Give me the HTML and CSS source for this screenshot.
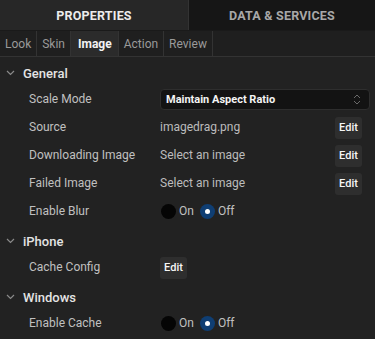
FILE: index.html
```html
<!DOCTYPE html>
<html>
<head>
<meta charset="utf-8">
<link rel="stylesheet" href="styles.css">
</head>
<body>
<div class="panel">
  <div class="tabs">
    <div class="tab active">PROPERTIES</div>
    <div class="tab">DATA &amp; SERVICES</div>
  </div>
  <div class="subtabs">
    <div class="subtab">Look</div>
    <div class="subtab">Skin</div>
    <div class="subtab active">Image</div>
    <div class="subtab">Action</div>
    <div class="subtab">Review</div>
  </div>
  <div class="content">
    <div class="section-head">
      <svg class="chev" width="9" height="6" viewBox="0 0 9 6"><path d="M1 1 L4.5 4.5 L8 1" fill="none" stroke="#8a8a8a" stroke-width="1.2"/></svg>
      <span>General</span>
    </div>
    <div class="row">
      <div class="label">Scale Mode</div>
      <div class="value">
        <div class="select">
          <span>Maintain Aspect Ratio</span>
          <svg width="8" height="11" viewBox="0 0 8 11"><path d="M1 4 L4 1 L7 4 M1 7 L4 10 L7 7" fill="none" stroke="#6a6a6a" stroke-width="1"/></svg>
        </div>
      </div>
    </div>
    <div class="row">
      <div class="label">Source</div>
      <div class="value spread"><span>imagedrag.png</span><button class="btn">Edit</button></div>
    </div>
    <div class="row">
      <div class="label">Downloading Image</div>
      <div class="value spread"><span>Select an image</span><button class="btn">Edit</button></div>
    </div>
    <div class="row">
      <div class="label">Failed Image</div>
      <div class="value spread"><span>Select an image</span><button class="btn">Edit</button></div>
    </div>
    <div class="row">
      <div class="label">Enable Blur</div>
      <div class="value radios">
        <span class="radio"></span><span class="rlabel">On</span>
        <span class="radio on"></span><span class="rlabel">Off</span>
      </div>
    </div>

    <div class="section-head later">
      <svg class="chev" width="9" height="6" viewBox="0 0 9 6"><path d="M1 1 L4.5 4.5 L8 1" fill="none" stroke="#8a8a8a" stroke-width="1.2"/></svg>
      <span>iPhone</span>
    </div>
    <div class="row">
      <div class="label">Cache Config</div>
      <div class="value"><button class="btn">Edit</button></div>
    </div>

    <div class="section-head later">
      <svg class="chev" width="9" height="6" viewBox="0 0 9 6"><path d="M1 1 L4.5 4.5 L8 1" fill="none" stroke="#8a8a8a" stroke-width="1.2"/></svg>
      <span>Windows</span>
    </div>
    <div class="row">
      <div class="label">Enable Cache</div>
      <div class="value radios">
        <span class="radio"></span><span class="rlabel">On</span>
        <span class="radio on"></span><span class="rlabel">Off</span>
      </div>
    </div>
  </div>
</div>
</body>
</html>
```

FILE: styles.css
```css
* { box-sizing: border-box; }
html, body {
  margin: 0;
  padding: 0;
  background: #222222;
  font-family: Roboto, "Liberation Sans", sans-serif;
  overflow: hidden;
}
.panel {
  width: 375px;
  height: 339px;
  background: #222222;
}
.tabs {
  display: flex;
  height: 31px;
  border-bottom: 1px solid #1a1a1a;
}
.tab {
  display: flex;
  align-items: center;
  justify-content: center;
  font-size: 12.5px;
  font-weight: 700;
  letter-spacing: 0.2px;
  color: #a8a8a8;
  background: #161616;
  flex: 1 1 0;
}
.tab.active {
  flex: 0 0 189px;
  background: #272727;
  color: #ececec;
  border-right: 1px solid #333;
}
.subtabs {
  display: flex;
  height: 26px;
  background: #1f1f1f;
  border-bottom: 1px solid #333;
}
.subtab {
  display: flex;
  align-items: center;
  padding: 0 5px;
  font-size: 12px;
  color: #9a9a9a;
  border-right: 1px solid #333;
  height: 100%;
}
.subtab.active {
  background: #2b2b2b;
  color: #f2f2f2;
  font-weight: 700;
  padding: 0 6px 0 7px;
}
.content {
  padding-top: 4px;
}
.section-head {
  display: flex;
  align-items: center;
  height: 24px;
  padding-left: 4px;
  font-size: 13px;
  font-weight: 500;
  color: #e4e4e4;
}
.section-head.later { margin-top: 4px; }
.chev { margin: 0 8px 0 2px; }
.row {
  display: flex;
  align-items: center;
  height: 28px;
}
.label {
  width: 160px;
  padding-left: 29px;
  font-size: 12px;
  color: #c0c0c0;
}
.value {
  flex: 1;
  display: flex;
  align-items: center;
  font-size: 12px;
  color: #bcbcbc;
  padding-right: 13px;
}
.spread { justify-content: space-between; }
.select {
  width: 210px;
  height: 21px;
  background: #131313;
  border: 1px solid #2e2e2e;
  border-radius: 4px;
  display: flex;
  align-items: center;
  justify-content: space-between;
  padding: 0 8px 0 5px;
  font-size: 11px;
  font-weight: 700;
  color: #f4f4f4;
  margin-right: -8px;
}
.btn {
  width: 27px;
  height: 22px;
  padding: 0;
  display: flex;
  align-items: center;
  justify-content: center;
  background: #2e2e2e;
  border: none;
  border-radius: 3px;
  font-family: Roboto, "Liberation Sans", sans-serif;
  font-size: 11px;
  font-weight: 500;
  color: #f6f6f6;
  margin-top: 1px;
}
.radio {
  width: 15px;
  height: 15px;
  border-radius: 50%;
  background: #050505;
  display: inline-block;
  position: relative;
  margin-left: 1px;
}
.radio.on {
  background: #0f3e73;
  margin-left: 6px;
}
.radio.on::after {
  content: "";
  position: absolute;
  left: 5px;
  top: 5px;
  width: 5px;
  height: 5px;
  border-radius: 50%;
  background: #ffffff;
}
.rlabel {
  margin-left: 3px;
  color: #c0c0c0;
  font-size: 12px;
}
```
